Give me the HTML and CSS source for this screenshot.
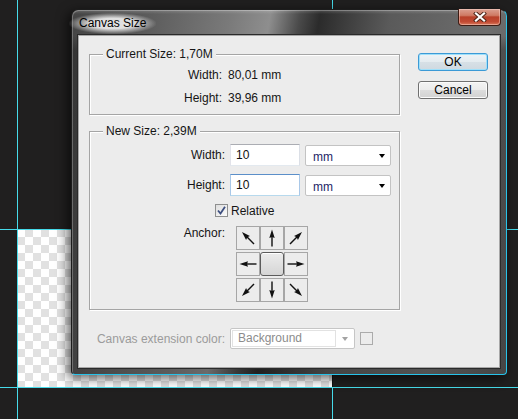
FILE: index.html
```html
<!DOCTYPE html>
<html lang="en">
<head>
    <meta charset="UTF-8">
    <title>Canvas Size</title>
    <link rel="stylesheet" href="styles.css">
</head>
<body>
    <svg class="defs" width="0" height="0">
        <defs>
            <g id="arr">
                <line x1="11" y1="9" x2="11" y2="19.5" stroke="#111" stroke-width="1.4"/>
                <polygon points="11,2.5 13.7,11 11,10 8.3,11" fill="#111"/>
            </g>
        </defs>
    </svg>

    <div class="workspace">
        <div class="guide guide-v far"></div>
        <div class="canvas"></div>
        <div class="guide guide-v near"></div>
        <div class="guide guide-h top"></div>
        <div class="guide guide-h bottom"></div>

        <!-- dialog window -->
        <div class="dialog">
            <div class="titlebar">
                <span class="title">Canvas Size</span>
                <button class="close">
                    <svg width="14" height="10" viewBox="0 0 14 10">
                        <path d="M3 1.5 L11 8.5 M11 1.5 L3 8.5" stroke="#4a2418" stroke-width="4" stroke-linecap="square"/>
                        <path d="M3 1.5 L11 8.5 M11 1.5 L3 8.5" stroke="#fff" stroke-width="2.2" stroke-linecap="square"/>
                    </svg>
                </button>
            </div>

            <div class="client">
                <div class="main">
                    <fieldset class="group current">
                        <legend>Current Size: 1,70M</legend>
                        <div class="info">
                            <span class="lbl">Width:</span><span class="val">80,01 mm</span>
                            <span class="lbl">Height:</span><span class="val">39,96 mm</span>
                        </div>
                    </fieldset>

                    <fieldset class="group newsize">
                        <legend>New Size: 2,39M</legend>
                        <div class="form">
                            <label class="lbl">Width:</label>
                            <input class="field" type="text" value="10">
                            <div class="select"><span class="text">mm</span><span class="caret"></span></div>

                            <label class="lbl">Height:</label>
                            <input class="field focus" type="text" value="10">
                            <div class="select"><span class="text">mm</span><span class="caret"></span></div>
                        </div>

                        <div class="check-row">
                            <span class="checkbox">
                                <svg width="11" height="11" viewBox="0 0 11 11">
                                    <path d="M2 5.5 L4.5 8.5 L9 1.8" fill="none" stroke="#3d4f80" stroke-width="1.8"/>
                                </svg>
                            </span>
                            <span>Relative</span>
                        </div>

                        <div class="anchor-row">
                            <span class="lbl">Anchor:</span>
                            <div class="anchor">
                                <div class="cell"><svg width="22" height="22"><use href="#arr" transform="rotate(-45 11 11)"/></svg></div>
                                <div class="cell"><svg width="22" height="22"><use href="#arr"/></svg></div>
                                <div class="cell"><svg width="22" height="22"><use href="#arr" transform="rotate(45 11 11)"/></svg></div>
                                <div class="cell"><svg width="22" height="22"><use href="#arr" transform="rotate(-90 11 11)"/></svg></div>
                                <div class="cell center"></div>
                                <div class="cell"><svg width="22" height="22"><use href="#arr" transform="rotate(90 11 11)"/></svg></div>
                                <div class="cell"><svg width="22" height="22"><use href="#arr" transform="rotate(-135 11 11)"/></svg></div>
                                <div class="cell"><svg width="22" height="22"><use href="#arr" transform="rotate(180 11 11)"/></svg></div>
                                <div class="cell"><svg width="22" height="22"><use href="#arr" transform="rotate(135 11 11)"/></svg></div>
                            </div>
                        </div>
                    </fieldset>

                    <div class="ext-row">
                        <span class="lbl">Canvas extension color:</span>
                        <div class="select disabled"><span class="text">Background</span><span class="caret"></span></div>
                        <span class="swatch"></span>
                    </div>
                </div>

                <div class="buttons">
                    <button class="btn default">OK</button>
                    <button class="btn">Cancel</button>
                </div>
            </div>
        </div>
    </div>
</body>
</html>
```

FILE: styles.css
```css
body {
    margin: 0;
    background-color: #201f1f;
    font-family: "Liberation Sans", Arial, sans-serif;
    font-size: 12px;
    color: #151515;
}
.defs {
    position: absolute;
    width: 0;
    height: 0;
}
.workspace {
    position: relative;
    width: 518px;
    height: 419px;
    overflow: hidden;
}

/* document canvas + guides */
.canvas {
    position: absolute;
    left: 17px;
    top: 229px;
    width: 316px;
    height: 158px;
    box-sizing: border-box;
    border-right: 1px solid #111;
    background: repeating-conic-gradient(#e1e1e1 0% 25%, #fff 0% 50%) 0 0 / 16px 16px;
}
.guide {
    position: absolute;
    background-color: #46dbea;
}
.guide-v {
    top: 0;
    width: 1px;
    height: 419px;
}
.guide-v.near { left: 17px; }
.guide-v.far { left: 332px; }
.guide-h {
    left: 0;
    width: 518px;
    height: 1px;
}
.guide-h.top { top: 229px; }
.guide-h.bottom { top: 387px; }

/* window frame */
.dialog {
    position: absolute;
    left: 71px;
    top: 9px;
    width: 436px;
    height: 366px;
    box-sizing: border-box;
    padding: 0 6px 6px 6px;
    border: 1px solid #1c1c1c;
    border-right-color: #27c3ea;
    border-bottom-color: #27c3ea;
    border-radius: 7px 7px 4px 4px;
    background:
        linear-gradient(180deg, rgba(255,255,255,0.18) 0, rgba(255,255,255,0) 4px, rgba(0,0,0,0) 26px, rgba(0,0,0,0.25) 40px),
        linear-gradient(100deg, #444 0%, #595959 14%, #7a7a7a 32%, #8e8e8e 40%, #4a4a4a 46%, #2b2b2b 50%, #3c3c3c 55%, #5a5a5a 64%, #6e6e6e 84%, #5c5c5c 100%);
    box-shadow: -3px 3px 12px rgba(0, 0, 0, 0.65), inset 1px 1px 0 rgba(255,255,255,0.25);
}
.titlebar {
    height: 25px;
    display: flex;
    justify-content: space-between;
    align-items: flex-start;
}
.title {
    margin: 3px 0 0 -9px;
    padding: 3px 10px 4px 10px;
    font-size: 12px;
    color: #000;
    background: radial-gradient(ellipse at center, rgba(240,240,240,0.9) 35%, rgba(240,240,240,0) 72%);
}
.close {
    width: 43px;
    height: 17px;
    margin: -1px -1px 0 0;
    padding: 0;
    border: 1px solid #3e1c14;
    border-top: none;
    border-radius: 0 0 4px 4px;
    background: linear-gradient(180deg, #dba091 0%, #cf7a64 40%, #b8412a 50%, #c24a33 80%, #d97a5c 100%);
    box-shadow: inset 0 0 0 1px rgba(255, 220, 210, 0.45);
    display: flex;
    align-items: center;
    justify-content: center;
}
.close svg { display: block; }

/* dialog body */
.client {
    height: 333px;
    box-sizing: border-box;
    display: flex;
    gap: 18px;
    padding: 11px 11px 0 10px;
    background-color: #ececec;
    border: 1px solid #a8a8a8;
    box-shadow: 0 0 0 1px #2a2a2a;
}
.main {
    width: 311px;
}
.group {
    margin: 0;
    padding: 0;
    border: 1px solid #a5a5a5;
    box-shadow: 1px 1px 0 #fff, inset 1px 1px 0 #fff;
    min-inline-size: 0;
}
.group legend {
    margin-left: 13px;
    padding: 0 3px;
    line-height: 15px;
    background-color: #ececec;
}
.lbl {
    text-align: right;
}
.info {
    display: grid;
    grid-template-columns: 132px auto;
    column-gap: 6px;
    grid-auto-rows: 23px;
    line-height: 23px;
    padding: 2px 0 4px 0;
}
.newsize {
    margin-top: 9px;
    padding: 5px 0 7px 0;
}
.form {
    display: grid;
    grid-template-columns: 135px 70px 86px;
    grid-auto-rows: 22px;
    column-gap: 5px;
    row-gap: 8px;
    align-items: center;
}
.field {
    height: 22px;
    width: 70px;
    box-sizing: border-box;
    margin: 0;
    padding: 0 5px;
    border: 1px solid;
    border-color: #abadb3 #dbdfe6 #e3e9ef #e2e3ea;
    font: inherit;
    color: #111;
    background-color: #fff;
    outline: none;
}
.field.focus {
    border-color: #5b8fc9 #a9c8e8 #b7d9ed #a9c8e8;
}
.select {
    height: 21px;
    box-sizing: border-box;
    margin-top: 1px;
    padding-left: 7px;
    display: flex;
    align-items: center;
    border: 1px solid #c3c3c3;
    border-radius: 2px;
    background-color: #fff;
    color: #1d2566;
}
.select .text {
    flex: 1;
    padding-top: 2px;
}
.caret {
    width: 0;
    height: 0;
    margin-right: 5px;
    border-left: 3.5px solid transparent;
    border-right: 3.5px solid transparent;
    border-top: 4px solid #000;
}
.check-row {
    display: flex;
    align-items: center;
    gap: 3px;
    height: 13px;
    margin-top: 8px;
    padding-left: 125px;
}
.checkbox {
    width: 13px;
    height: 13px;
    box-sizing: border-box;
    border: 1px solid #8e8f8f;
    background: linear-gradient(135deg, #dedede, #fbfbfb);
    display: flex;
    align-items: center;
    justify-content: center;
}
.checkbox svg { display: block; }
.anchor-row {
    display: grid;
    grid-template-columns: 135px 72px;
    column-gap: 11px;
    margin-top: 9px;
    line-height: 14px;
}
.anchor {
    display: grid;
    grid-template-columns: repeat(3, 24px);
    grid-auto-rows: 24px;
    row-gap: 2px;
}
.cell {
    box-sizing: border-box;
    border: 1px solid #a6a6a6;
    background-color: #ececec;
}
.cell svg { display: block; }
.cell.center {
    border-color: #5c5c5c;
    border-radius: 3px;
    background: linear-gradient(180deg, #ececec, #d5d5d5);
    box-shadow: inset 0 1px 0 #fff;
}
.ext-row {
    display: grid;
    grid-template-columns: 136px 125px 13px;
    column-gap: 5px;
    align-items: center;
    margin-top: 18px;
    color: #9b9b9b;
}
.select.disabled {
    margin-top: 0;
    padding: 1px;
    border-color: #c6c6c6;
    color: #8c8c8c;
}
.select.disabled .text {
    height: 17px;
    line-height: 15px;
    padding: 0 0 0 5px;
    border: 1px solid #e2e2e2;
    box-sizing: border-box;
}
.select.disabled .caret {
    margin: 0 5px 0 6px;
    border-top-color: #a3a3a3;
}
.swatch {
    width: 13px;
    height: 13px;
    box-sizing: border-box;
    border: 1px solid #ababab;
}

/* OK / Cancel */
.buttons {
    width: 70px;
    margin-top: 6px;
    display: flex;
    flex-direction: column;
    gap: 10px;
}
.btn {
    height: 18px;
    padding: 0;
    border: 1px solid #707070;
    border-radius: 3px;
    font: inherit;
    color: #000;
    background: linear-gradient(180deg, #f3f3f3 0%, #ebebeb 50%, #dddddd 50%, #d2d2d2 100%);
    box-shadow: inset 0 0 0 1px #fbfbfb;
}
.btn.default {
    border-color: #3c9ad6;
    background: linear-gradient(180deg, #eef3f6 0%, #e4ebef 50%, #d7e0e6 50%, #cfd9e0 100%);
    box-shadow: inset 0 0 0 1px #9fe0fa;
}
```
